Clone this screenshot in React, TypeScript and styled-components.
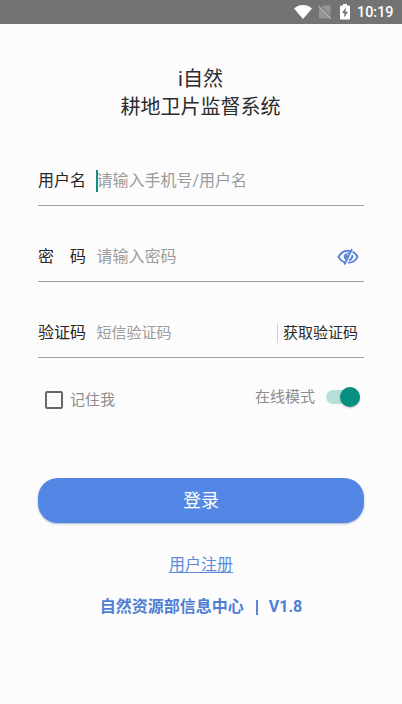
import React, { useState } from "react";
import styled, { createGlobalStyle } from "styled-components";

const GlobalStyle = createGlobalStyle`
  * { box-sizing: border-box; }
  body {
    margin: 0;
    background: #fcfcfc;
    font-family: Roboto, "Noto Sans CJK SC", sans-serif;
  }
`;

const Screen = styled.div`
  height: 704px;
  display: flex;
  flex-direction: column;
  background: #fcfcfc;
  overflow: hidden;
`;

const StatusBar = styled.header`
  flex: none;
  height: 24px;
  padding-right: 8px;
  display: flex;
  align-items: center;
  justify-content: flex-end;
  background: #737373;
  color: #fff;
`;

const StatusIcon = styled.svg<{ $gap: number }>`
  display: block;
  flex: none;
  margin-right: ${(p) => p.$gap}px;
`;

const Clock = styled.span`
  width: 37px;
  padding-top: 1px;
  font-size: 14.4px;
  font-weight: 500;
  line-height: 23px;
  white-space: nowrap;
`;

const Content = styled.main`
  display: flex;
  flex-direction: column;
  padding: 0 38px;
`;

const Title = styled.h1`
  margin: 41px 1px 9px 0;
  font-size: 20px;
  line-height: 28px;
  font-weight: 400;
  text-align: center;
  color: #2b2b2b;
`;

const Field = styled.div`
  height: 76px;
  padding-top: 26px;
  display: flex;
  align-items: center;
  border-bottom: 1px solid #a0a0a0;
`;

const Label = styled.label`
  width: 48px;
  margin-right: 10px;
  display: flex;
  justify-content: space-between;
  font-size: 16px;
  line-height: 24px;
  color: #262626;
  white-space: nowrap;
`;

const Caret = styled.span`
  width: 2px;
  height: 22px;
  margin-right: -2px;
  background: #12907f;
`;

const Placeholder = styled.span<{ $size: number }>`
  flex: 1;
  padding-left: 0.5px;
  font-size: ${(p) => p.$size}px;
  line-height: 24px;
  color: #9b9b9b;
  white-space: nowrap;
`;

const EyeButton = styled.button`
  margin: 0 5px 0 0;
  padding: 0;
  border: 0;
  background: none;
  display: flex;
`;

const CodeButton = styled.button`
  height: 20px;
  margin: 0;
  padding: 0 6px 0 5px;
  border: 0;
  border-left: 1px solid #cfcfcf;
  background: none;
  font: 400 15px/20px Roboto, "Noto Sans CJK SC", sans-serif;
  color: #2b2b2b;
  white-space: nowrap;
`;

const Options = styled.div`
  display: flex;
  justify-content: space-between;
  align-items: flex-start;
  height: 120px;
  padding: 27px 4px 0 7px;
  font-size: 15px;
  line-height: 24px;
  color: #8c8c8c;
`;

const Remember = styled.label`
  display: flex;
  align-items: center;
  gap: 7px;
  padding-top: 3px;
`;

const CheckBox = styled.span`
  width: 18px;
  height: 18px;
  border: 2px solid #666;
  border-radius: 2px;
`;

const Online = styled.label`
  display: flex;
  align-items: center;
  gap: 11px;
`;

const Track = styled.span`
  width: 34px;
  height: 14px;
  border-radius: 7px;
  background: #b8e0db;
  display: flex;
  align-items: center;
  justify-content: flex-end;
`;

const Thumb = styled.span`
  flex: none;
  width: 20px;
  height: 20px;
  border-radius: 50%;
  background: #078f80;
  box-shadow: 0 1px 2px rgba(0, 0, 0, 0.25);
`;

const LoginButton = styled.button`
  height: 45px;
  margin: 0;
  padding: 0;
  border: 0;
  border-radius: 20px;
  background: #5487e5;
  box-shadow: 0 1px 2px rgba(50, 75, 120, 0.42);
  font: 400 18px/45px Roboto, "Noto Sans CJK SC", sans-serif;
  color: #fff;
`;

const Register = styled.a`
  align-self: center;
  margin-top: 30px;
  font-size: 16px;
  line-height: 24px;
  color: #5d8ad8;
  text-decoration: underline;
  text-decoration-thickness: 1px;
  text-underline-offset: 2px;
`;

const Footer = styled.p`
  margin: 18px 0 0;
  display: flex;
  justify-content: center;
  align-items: center;
  font-size: 16px;
  line-height: 24px;
  font-weight: 700;
  color: #4f7fd3;
  white-space: nowrap;
`;

const Divider = styled.span`
  width: 2px;
  height: 15px;
  margin: 0 11px 0 12px;
  background: #5b88d5;
`;

const Toast = styled.div`
  flex: none;
  align-self: flex-end;
  width: 190px;
  height: 51px;
  margin: 23px 15px 0 0;
  background: #fbfbfb;
`;

export default function App() {
  const [checked] = useState(false);
  return (
    <>
      <GlobalStyle />
      <Screen>
        <StatusBar>
          <StatusIcon $gap={6} width="18" height="14" viewBox="0 0 18 14">
            <path d="M0 3.4C5.3-1.1 12.7-1.1 18 3.4L9 14Z" fill="#fff" />
          </StatusIcon>
          <StatusIcon $gap={8} width="14" height="14" viewBox="0 0 14 14">
            <path d="M5 0.5H12.5V13.5H1V4.5Z" fill="#969696" />
            <path d="M2.2 0.9L14 12.8" stroke="#737373" strokeWidth="1.2" />
            <path d="M0.5 1L13 13.5" stroke="#b0b0b0" strokeWidth="1.2" />
          </StatusIcon>
          <StatusIcon $gap={7} width="10" height="16" viewBox="0 0 10 16">
            <path d="M3 0H7V1.5H9Q10 1.5 10 2.5V14.5Q10 15.5 9 15.5H1Q0 15.5 0 14.5V2.5Q0 1.5 1 1.5H3Z" fill="#fff" />
            <path d="M6 3.5L2 9H4.5L4 13.5L8 7.8H5.4Z" fill="#6c6c6c" />
          </StatusIcon>
          <Clock>10:19</Clock>
        </StatusBar>
        <Content>
          <Title>
            i自然
            <br />
            耕地卫片监督系统
          </Title>
          <Field>
            <Label>用户名</Label>
            <Caret />
            <Placeholder $size={16}>请输入手机号/用户名</Placeholder>
          </Field>
          <Field>
            <Label>
              <span>密</span>
              <span>码</span>
            </Label>
            <Placeholder $size={16}>请输入密码</Placeholder>
            <EyeButton aria-label="显示密码">
              <svg width="22" height="18" viewBox="0 0 22 18" fill="none" stroke="#5582d5" strokeWidth="1.9" strokeLinecap="round">
                <path d="M13 3.1C7.8 1.9 4 4.5 1.4 8.9C3 11.7 5 13.4 7.2 14.2" />
                <path d="M16.2 4.2C18.2 5.2 19.6 6.8 20.6 8.9C18.5 12.7 15.5 14.6 11.7 14.6" />
                <path d="M14.6 1.8L7.8 15.8" />
                <path d="M12.2 4.6C9.2 4.4 6.8 6.2 6.8 8.7C6.8 10.1 7.8 11.4 8.8 12Z" fill="#5582d5" stroke="none" />
                <path d="M15.3 7.8C15.4 9.9 14.3 11.2 12.6 12" />
                <path d="M9.8 5.4L10.7 7.2" stroke="#dce6f8" strokeWidth="1" />
              </svg>
            </EyeButton>
          </Field>
          <Field>
            <Label>验证码</Label>
            <Placeholder $size={15}>短信验证码</Placeholder>
            <CodeButton>获取验证码</CodeButton>
          </Field>
          <Options>
            <Remember>
              <CheckBox role="checkbox" aria-checked={checked} />
              记住我
            </Remember>
            <Online>
              在线模式
              <Track>
                <Thumb />
              </Track>
            </Online>
          </Options>
          <LoginButton>登录</LoginButton>
          <Register>用户注册</Register>
          <Footer>
            自然资源部信息中心
            <Divider />
            V1.8
          </Footer>
        </Content>
        <Toast />
      </Screen>
    </>
  );
}
